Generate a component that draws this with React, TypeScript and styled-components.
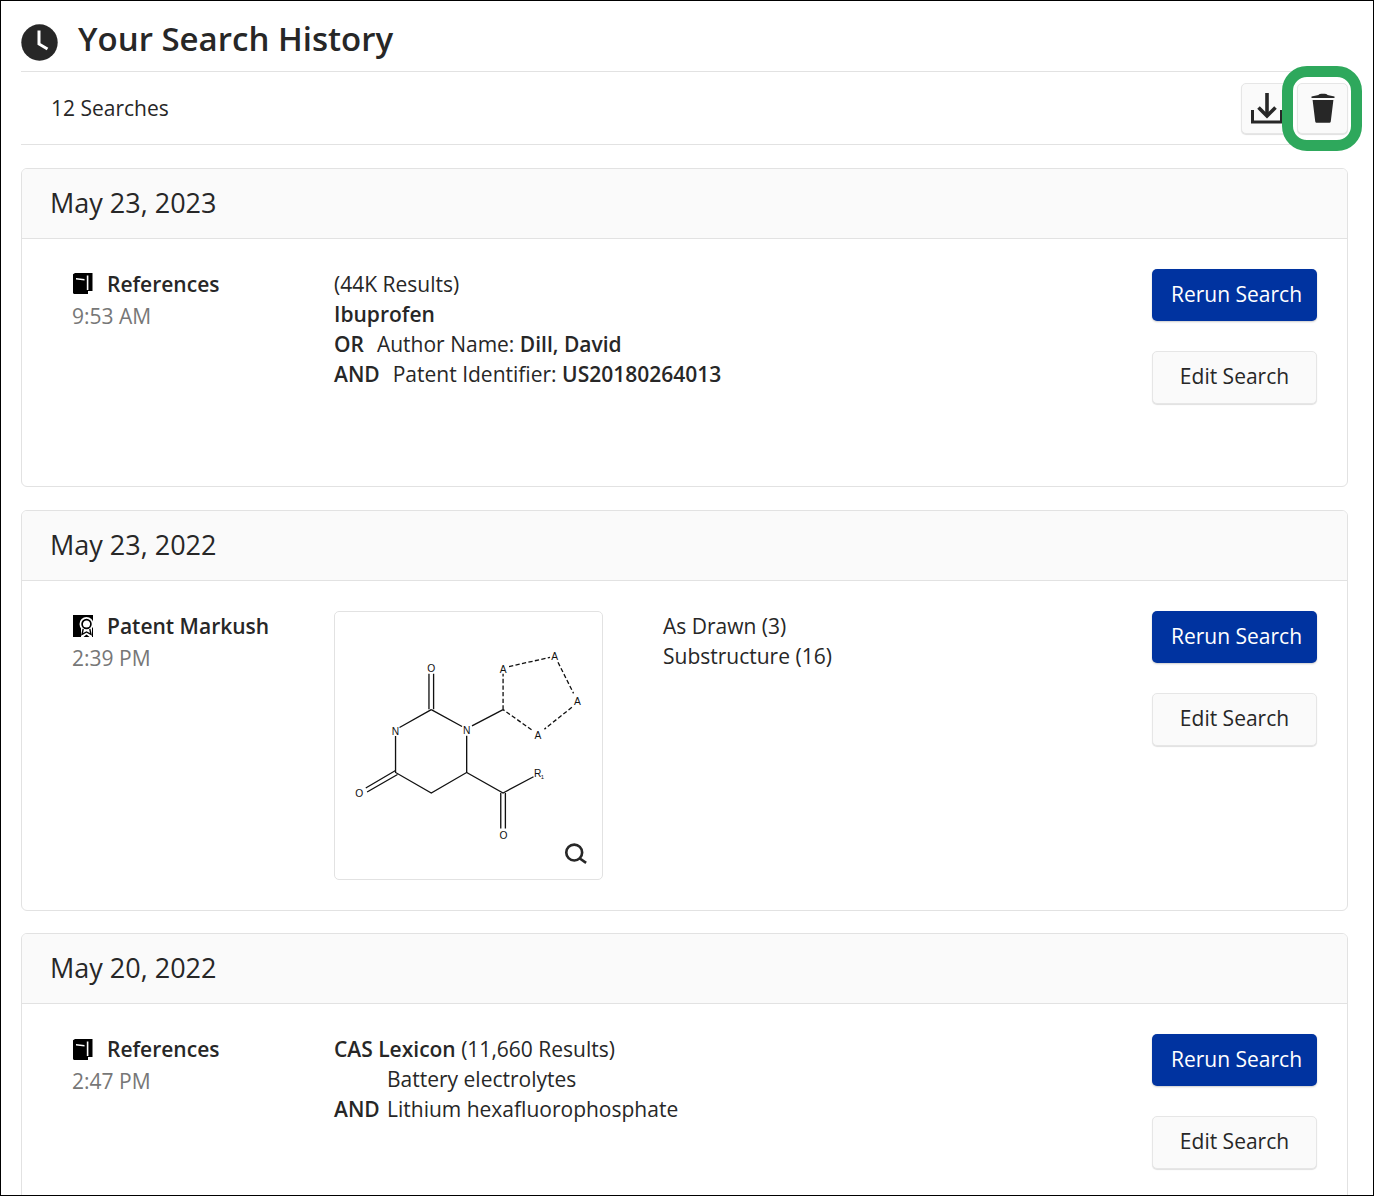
import styled, { createGlobalStyle } from "styled-components";

const GlobalStyle = createGlobalStyle`
  html, body {
    margin: 0;
    padding: 0;
    background: #fff;
  }

  * {
    box-sizing: border-box;
  }
`;

// Small icons
function ClockIcon() {
  return (
    <svg width="37" height="37" viewBox="0 0 37 37">
      <circle cx="18.5" cy="18.5" r="18.2" fill="#272727" />
      <path d="M18 6.5v13.5l8.5 5" fill="none" stroke="#fff" strokeWidth="3" />
    </svg>
  );
}

function DownloadIcon() {
  return (
    <svg width="32" height="31" viewBox="0 0 32 31">
      <path d="M1.5 17v12h29V17" fill="none" stroke="#272727" strokeWidth="3" />
      <path d="M16 0v23" fill="none" stroke="#272727" strokeWidth="3.6" />
      <path d="M7.5 14.5l8.5 8.5 8.5-8.5" fill="none" stroke="#272727" strokeWidth="3.6" />
    </svg>
  );
}

function TrashIcon() {
  return (
    <svg width="24" height="30" viewBox="0 0 24 30">
      <path d="M7.5 2C7.5 .4 16.5 .4 16.5 2L23.5 3.4v1.6H.5V3.4z" fill="#272727" />
      <path d="M1.6 7h20.8l-2.6 21.2c-.1 1-.8 1.6-1.8 1.6H6c-1 0-1.7-.6-1.8-1.6z" fill="#272727" />
    </svg>
  );
}

function BookIcon() {
  return (
    <svg width="20" height="21" viewBox="0 0 20 21">
      <path d="M0 1.2L2 0h17.5v18H15v3H1.5C.6 21 0 20.4 0 19.5z" fill="#000" />
      <path d="M3 5l8.5 1v1.6L3 6.6z" fill="#fff" />
      <path d="M13.8 2.5h1.6v14.5h-1.6z" fill="#fff" />
    </svg>
  );
}

function PatentIcon() {
  return (
    <svg width="21" height="22" viewBox="0 0 21 22">
      <path d="M0 0h20v22H0z" fill="#000" />
      <circle cx="13.5" cy="9" r="7" fill="#fff" />
      <path d="M8 13h11v9h-2.5l-3-2.5-3 2.5H8z" fill="#fff" />
      <circle cx="13.5" cy="9" r="4.4" fill="none" stroke="#000" strokeWidth="1.7" />
      <path d="M10.2 14l-1.2 5.4 4.5-2.4 4.5 2.4-1.2-5.4" fill="none" stroke="#000" strokeWidth="1.4" />
    </svg>
  );
}

// Markush structure, in the coordinates of the 807 unit tile
function Structure() {
  return (
    <Drawing viewBox="12 18 807 807">
      <g fill="none" stroke="#111" strokeWidth="4">
        <path d="M296 205V312M310 205V312" />
        <path d="M303 313L207 367M303 313L396 364" />
        <path d="M195 393V503L303 565L410 503V392" />
        <path d="M195 497L105 550M201 509L109 562" />
        <path d="M410 503L520 565L612 516" />
        <path d="M513 565V672M527 565V672" />
        <path d="M426 362L520 313" />
        <path
          d="M520 313V205M538 183L662 155M686 170L733 264M728 306L645 372M606 374L520 313"
          strokeDasharray="13 7"
        />
      </g>
      <g fontFamily="'Liberation Sans', sans-serif" fontSize="31" fill="#111" textAnchor="middle">
        <text x="303" y="200">O</text>
        <text x="195" y="389">N</text>
        <text x="410" y="387">N</text>
        <text x="85" y="578">O</text>
        <text x="521" y="703">O</text>
        <text x="520" y="201">A</text>
        <text x="676" y="162">A</text>
        <text x="745" y="300">A</text>
        <text x="625" y="401">A</text>
        <text x="625" y="516">R</text>
        <text x="639" y="524" fontSize="18">1</text>
      </g>
      <g fill="none" stroke="#272727">
        <circle cx="735" cy="745" r="24" strokeWidth="8" />
        <path d="M752 763L771 776" strokeWidth="8" />
      </g>
    </Drawing>
  );
}

function Actions() {
  return (
    <ActionColumn>
      <RerunButton>Rerun Search</RerunButton>
      <EditButton>Edit Search</EditButton>
    </ActionColumn>
  );
}

export default function App() {
  return (
    <>
      <GlobalStyle />
      <Page>
        <TitleRow>
          <ClockIcon />
          <Title>Your Search History</Title>
        </TitleRow>

        <Toolbar>
          <Count>12 Searches</Count>
          <ToolButtons>
            <ToolButton>
              <DownloadIcon />
            </ToolButton>
            <ToolButton>
              <TrashIcon />
              <Highlight />
            </ToolButton>
          </ToolButtons>
        </Toolbar>

        <Card>
          <CardDate>May 23, 2023</CardDate>
          <CardBody>
            <Source>
              <SourceName>
                <IconSlot>
                  <BookIcon />
                </IconSlot>
                References
              </SourceName>
              <SourceTime>9:53 AM</SourceTime>
            </Source>
            <Query>
              <Line>(44K Results)</Line>
              <Line>
                <Strong>Ibuprofen</Strong>
              </Line>
              <Line>
                <Operator>OR</Operator>
                Author Name: <Strong>Dill, David</Strong>
              </Line>
              <Line>
                <Operator>AND</Operator>
                Patent Identifier: <Strong>US20180264013</Strong>
              </Line>
            </Query>
            <Actions />
          </CardBody>
        </Card>

        <Card>
          <CardDate>May 23, 2022</CardDate>
          <CardBody>
            <Source>
              <SourceName>
                <IconSlot>
                  <PatentIcon />
                </IconSlot>
                Patent Markush
              </SourceName>
              <SourceTime>2:39 PM</SourceTime>
            </Source>
            <StructureTile>
              <Structure />
            </StructureTile>
            <Query>
              <Line>As Drawn (3)</Line>
              <Line>Substructure (16)</Line>
            </Query>
            <Actions />
          </CardBody>
        </Card>

        <Card>
          <CardDate>May 20, 2022</CardDate>
          <CardBody>
            <Source>
              <SourceName>
                <IconSlot>
                  <BookIcon />
                </IconSlot>
                References
              </SourceName>
              <SourceTime>2:47 PM</SourceTime>
            </Source>
            <Query>
              <Line>
                <Strong>CAS Lexicon</Strong> (11,660 Results)
              </Line>
              <Line $indent={53}>Battery electrolytes</Line>
              <Line>
                <Operator $width={53}>AND</Operator>
                Lithium hexafluorophosphate
              </Line>
            </Query>
            <Actions />
          </CardBody>
        </Card>
      </Page>
    </>
  );
}

const Page = styled.main`
  height: 1196px;
  overflow: hidden;
  border: 1px solid #000;
  padding: 0 25px 0 20px;
  background: #fff;
  color: #272727;
  font-family: "Open Sans", sans-serif;
  font-size: 21px;
  line-height: 30px;
`;

const TitleRow = styled.header`
  height: 71px;
  padding-top: 13px;
  display: flex;
  align-items: center;
  column-gap: 20px;
  border-bottom: 1px solid #e2e2e2;
`;

const Title = styled.h1`
  margin: 0 0 8px;
  font-size: 33px;
  line-height: 44px;
  font-weight: 600;
`;

const Toolbar = styled.div`
  height: 73px;
  padding: 0 0 0 30px;
  display: flex;
  align-items: center;
  justify-content: space-between;
  border-bottom: 1px solid #e2e2e2;
`;

const Count = styled.span`
  display: block;
`;

const ToolButtons = styled.div`
  display: flex;
  column-gap: 5px;
`;

const ToolButton = styled.button`
  position: relative;
  width: 51px;
  height: 51px;
  padding: 0;
  display: grid;
  place-items: center;
  background: #fafafa;
  border: 1px solid #e6e6e6;
  border-radius: 5px;
  box-shadow: 0 1px 1px #e0e0e0;
`;

const Highlight = styled.span`
  position: absolute;
  left: -16px;
  top: -18px;
  width: 80px;
  height: 85px;
  border: 11px solid #2ea85c;
  border-radius: 25px;
`;

const Card = styled.section`
  margin-top: 22.5px;
  border: 1px solid #e2e2e2;
  border-radius: 6px;
  overflow: hidden;
`;

const CardDate = styled.h2`
  margin: 0;
  height: 70px;
  padding: 0 0 1px 28px;
  display: flex;
  align-items: center;
  background: #fafafa;
  border-bottom: 1px solid #e2e2e2;
  font-size: 27px;
  font-weight: 400;
`;

const CardBody = styled.div`
  min-height: 247.5px;
  padding: 30px 30px 30px 50px;
  display: flex;
  align-items: flex-start;
`;

const Source = styled.div`
  width: 262px;
  flex: none;
`;

const SourceName = styled.div`
  display: flex;
  align-items: center;
  font-weight: 600;
`;

const IconSlot = styled.span`
  width: 35px;
  height: 30px;
  display: flex;
  align-items: center;
  padding-left: 1px;
`;

const SourceTime = styled.div`
  margin-top: 2px;
  color: #777;
`;

const Query = styled.div`
  flex: 1;
`;

const Line = styled.div<{ $indent?: number }>`
  padding-left: ${({ $indent }) => $indent ?? 0}px;
`;

const Strong = styled.span`
  font-weight: 600;
`;

const Operator = styled.span<{ $width?: number }>`
  display: inline-block;
  font-weight: 600;
  ${({ $width }) => ($width ? `width: ${$width}px;` : "margin-right: 13px;")}
`;

const StructureTile = styled.div`
  width: 269px;
  height: 269px;
  flex: none;
  margin-right: 60px;
  border: 1px solid #e2e2e2;
  border-radius: 5px;
`;

const Drawing = styled.svg`
  display: block;
  width: 100%;
  height: 100%;
`;

const ActionColumn = styled.div`
  width: 165px;
  flex: none;
  display: flex;
  flex-direction: column;
  row-gap: 30px;
`;

const RerunButton = styled.button`
  height: 52px;
  padding: 0 0 2px 4px;
  background: #0033a0;
  border: none;
  border-radius: 5px;
  box-shadow: 0 1px 2px #ccc;
  color: #fff;
  font: inherit;
`;

const EditButton = styled.button`
  height: 53px;
  padding: 0 0 3px;
  background: #fafafa;
  border: 1px solid #e6e6e6;
  border-radius: 5px;
  box-shadow: 0 1px 1px #e0e0e0;
  color: #272727;
  font: inherit;
`;
